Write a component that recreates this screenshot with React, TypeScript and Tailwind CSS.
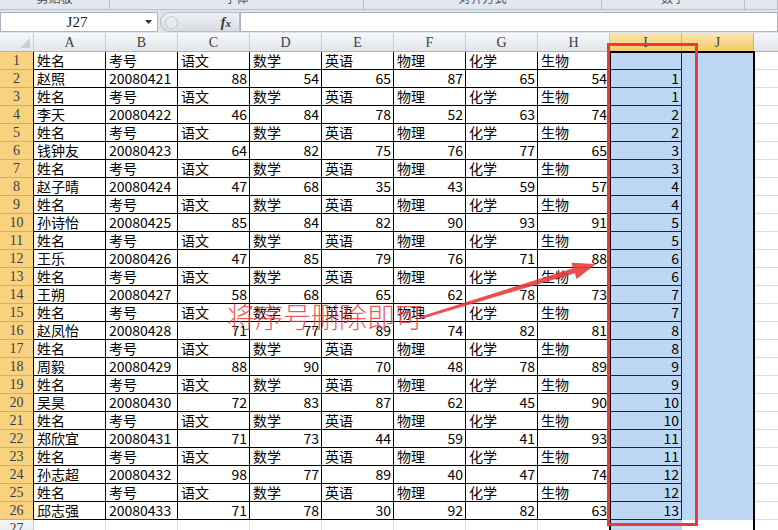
import React from 'react';

const cols = ['A', 'B', 'C', 'D', 'E', 'F', 'G', 'H', 'I', 'J'];
const head = ['姓名', '考号', '语文', '数学', '英语', '物理', '化学', '生物'];

const students: (string | number)[][] = [
  ['赵照', '20080421', 88, 54, 65, 87, 65, 54],
  ['李天', '20080422', 46, 84, 78, 52, 63, 74],
  ['钱钟友', '20080423', 64, 82, 75, 76, 77, 65],
  ['赵子晴', '20080424', 47, 68, 35, 43, 59, 57],
  ['孙诗怡', '20080425', 85, 84, 82, 90, 93, 91],
  ['王乐', '20080426', 47, 85, 79, 76, 71, 88],
  ['王朔', '20080427', 58, 68, 65, 62, 78, 73],
  ['赵凤怡', '20080428', 71, 77, 89, 74, 82, 81],
  ['周毅', '20080429', 88, 90, 70, 48, 78, 89],
  ['吴昊', '20080430', 72, 83, 87, 62, 45, 90],
  ['郑欣宜', '20080431', 71, 73, 44, 59, 41, 93],
  ['孙志超', '20080432', 98, 77, 89, 40, 47, 74],
  ['邱志强', '20080433', 71, 78, 30, 92, 82, 63],
];

// rows 1..26: header row, then student / header alternating, with the helper number in column I
const rows = Array.from({ length: 26 }, (_, i) => {
  const r = i + 1;
  if (r === 1) return { cells: head, seq: null as number | null };
  if (r % 2 === 0) return { cells: students[r / 2 - 1], seq: r / 2 };
  return { cells: head, seq: (r - 1) / 2 };
});

const groups = [
  { w: 'w-[110px]', label: '剪贴板' },
  { w: 'w-[254px]', label: '字体' },
  { w: 'w-[238px]', label: '对齐方式' },
  { w: 'w-[143px]', label: '数字' },
  { w: 'flex-1', label: '' },
];

const cellFont = { fontFamily: '"Noto Sans CJK SC", "Noto Sans", sans-serif' };
const hdrFont = { fontFamily: '"Liberation Serif", "DejaVu Serif", serif' };

function DataRow({ r, cells, seq }: { r: number; cells: (string | number)[]; seq: number | null }) {
  return (
    <div className="flex h-[18px]">
      <div
        className="w-[34px] shrink-0 border-r border-b border-r-black border-b-[#d6ae62] bg-[#f8d27e] text-center text-[14px] leading-[17px] text-[#3a3f4a]"
        style={hdrFont}
      >
        {r}
      </div>
      {cells.map((v, i) => (
        <div
          key={i}
          className={`w-[72px] shrink-0 overflow-hidden whitespace-nowrap border-r border-b border-black px-[2px] text-[14px] leading-[17px] text-black ${
            typeof v === 'number' ? 'text-right' : 'text-left pl-[3px]'
          }`}
          style={cellFont}
        >
          {v}
        </div>
      ))}
      <div
        className="w-[72px] shrink-0 border-r border-b border-[#1b2533] bg-[#bdd7f4] px-[2px] text-right text-[14px] leading-[17px] text-black"
        style={cellFont}
      >
        {seq ?? ''}
      </div>
      <div className="w-[72px] shrink-0 border-b border-[#bdd7f4] bg-[#bdd7f4]" />
      <div className="flex-1 border-b border-l border-[#dadcdd] bg-white" />
    </div>
  );
}

export default function App() {
  return (
    <div className="relative h-[530px] w-[778px] overflow-hidden bg-white select-none">
      {/* ribbon group labels, cut off at the top */}
      <div
        className="flex h-[10px] overflow-hidden border-b border-[#b6c0cc] bg-[#e3e8ee] text-[12px] text-[#4a5566]"
        style={cellFont}
      >
        {groups.map((g, i) => (
          <div key={i} className={`${g.w} h-full shrink-0 border-r border-[#b6c0cc] text-center`}>
            <div className="-mt-[10px] leading-[16px]">{g.label}</div>
          </div>
        ))}
      </div>

      {/* formula bar */}
      <div className="flex h-[23px] items-stretch bg-[#dfe4ea] pt-[2px] pb-[1px]">
        <div className="flex w-[158px] shrink-0 items-center border border-[#a9b4c2] bg-white">
          <div className="flex-1 pl-[8px] text-center text-[15px] text-[#1b1b1b]" style={hdrFont}>
            J27
          </div>
          <svg width="8" height="5" viewBox="0 0 8 5" className="mr-[4px]">
            <path d="M0 0h7L3.5 4z" fill="#333" />
          </svg>
        </div>
        <div className="flex w-[80px] shrink-0 items-center rounded-l-[10px] border border-[#b3bcc8] bg-gradient-to-b from-[#eef1f4] to-[#d8dde3] ml-[2px]">
          <div className="ml-[4px] h-[13px] w-[13px] rounded-full border border-[#c4cad2] bg-[#e6e9ed]" />
          <div className="flex-1" />
          <span className="mr-[8px] text-[14px] font-bold italic text-[#333]" style={hdrFont}>
            f<span className="text-[11px]">x</span>
          </span>
        </div>
        <div className="flex-1 border border-[#a9b4c2] bg-white" />
      </div>

      {/* column headers */}
      <div className="flex h-[19px] border-b border-[#9eb6ce]">
        <div className="relative w-[34px] shrink-0 border-r border-[#c5cbd3] bg-gradient-to-b from-[#f6f7f9] to-[#e2e6eb]">
          <svg width="10" height="10" viewBox="0 0 10 10" className="absolute right-[3px] bottom-[3px]">
            <path d="M10 0v10H0z" fill="#c9ced6" />
          </svg>
        </div>
        {cols.map((c) => {
          const sel = c === 'I' || c === 'J';
          return (
            <div
              key={c}
              className={`w-[72px] shrink-0 border-r text-center text-[14px] leading-[19px] ${
                sel
                  ? 'border-[#d9b063] bg-gradient-to-b from-[#fbe6b0] to-[#f5c865] text-[#3a3f4a]'
                  : 'border-[#c5cbd3] bg-gradient-to-b from-[#f6f7f9] to-[#e2e6eb] text-[#3a3f4a]'
              }`}
              style={hdrFont}
            >
              {c}
            </div>
          );
        })}
        <div className="flex-1 bg-gradient-to-b from-[#f6f7f9] to-[#e2e6eb]" />
      </div>

      {/* sheet rows */}
      {rows.map((row, i) => (
        <DataRow key={i} r={i + 1} cells={row.cells} seq={row.seq} />
      ))}
      <div className="flex h-[18px]">
        <div
          className="w-[34px] shrink-0 border-r border-b border-[#c5cbd3] bg-gradient-to-b from-[#f6f7f9] to-[#e2e6eb] text-center text-[14px] leading-[17px] text-[#3a3f4a]"
          style={hdrFont}
        >
          27
        </div>
        {cols.slice(0, 8).map((c) => (
          <div key={c} className="w-[72px] shrink-0 border-r border-b border-[#dadcdd]" />
        ))}
        <div className="w-[72px] shrink-0 border-b border-[#bdd7f4] bg-[#bdd7f4]" />
        <div className="w-[72px] shrink-0 border-b border-[#dadcdd] bg-white" />
        <div className="flex-1 border-b border-l border-[#dadcdd]" />
      </div>

      {/* selection outline I:J */}
      <div className="pointer-events-none absolute left-[609px] top-[51px] h-[490px] w-[146px] border-2 border-black" />

      {/* annotation */}
      <div className="pointer-events-none absolute left-[607px] top-[43px] h-[483px] w-[91px] border-[3px] border-[#ec3a3c]" />
      <svg className="pointer-events-none absolute left-0 top-0" width="778" height="530" viewBox="0 0 778 530">
        <polygon
          points="420.3,319.2 574.9,273.3 576.6,279 596,264 571.4,262.8 573.1,268.2 419.7,316.8"
          fill="#ec3a3c"
          fillOpacity="0.9"
        />
      </svg>
      <div
        className="pointer-events-none absolute left-[227px] top-[302px] whitespace-nowrap text-[28px] leading-none font-light text-[#ec3a3c]/85"
        style={cellFont}
      >
        将序号删除即可
      </div>
    </div>
  );
}
